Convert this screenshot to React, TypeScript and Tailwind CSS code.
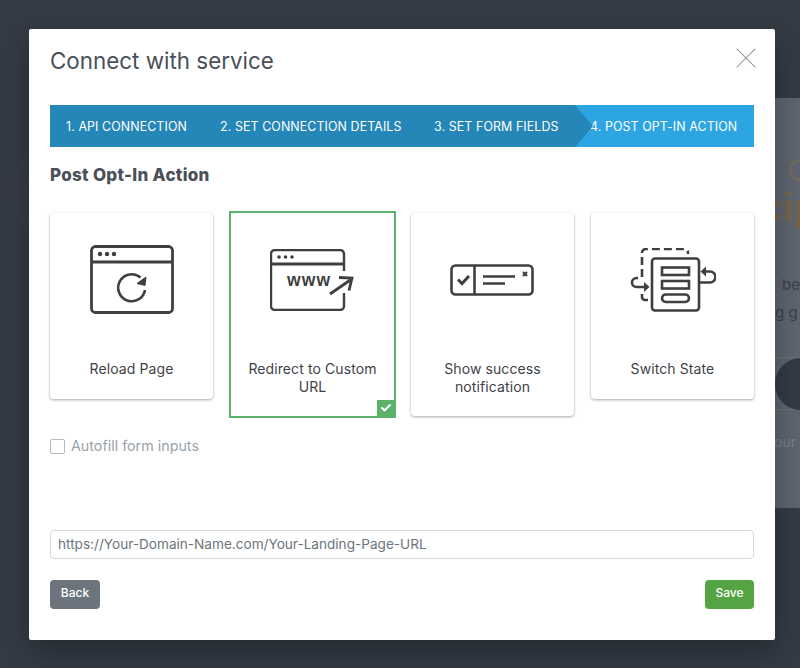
import React from 'react';
import { X, Check } from 'lucide-react';

const ReloadIcon = () => (
  <svg width="84" height="70" viewBox="0 0 84 70" fill="none" stroke="#3f3f3f" strokeWidth="2.8">
    <rect x="1.500" y="1.500" width="81" height="66" rx="4" />
    <path d="M1.500 17h81" />
    <circle cx="10" cy="9" r="2.200" fill="#3f3f3f" stroke="none" />
    <circle cx="17" cy="9" r="2.200" fill="#3f3f3f" stroke="none" />
    <circle cx="24" cy="9" r="2.200" fill="#3f3f3f" stroke="none" />
    <path d="M50.500 32.500A13.500 13.500 0 1 0 55 45" strokeWidth="2.600" />
    <path d="M47 38.500L56 32L55 40.500z" fill="#3f3f3f" stroke="#3f3f3f" strokeWidth="1" />
  </svg>
);

const RedirectIcon = () => (
  <svg width="86" height="62" viewBox="0 0 86 62" fill="none" stroke="#3f3f3f" strokeWidth="2.400">
    <path d="M74 22V5a4 4 0 0 0 -4 -4H5a4 4 0 0 0 -4 4v52a4 4 0 0 0 4 4h65a4 4 0 0 0 4 -4V44" />
    <path d="M1 15h73" strokeWidth="2.800" />
    <circle cx="9" cy="8" r="1.800" fill="#3f3f3f" stroke="none" />
    <circle cx="15.500" cy="8" r="1.800" fill="#3f3f3f" stroke="none" />
    <circle cx="22" cy="8" r="1.800" fill="#3f3f3f" stroke="none" />
    <text x="17" y="36.500" textLength="43" fontFamily="'Liberation Sans', sans-serif" fontSize="17.500" fontWeight="700" fill="#3f3f3f" stroke="none">www</text>
    <path d="M60 45l21-14.500M69 28.500l13 .5-3 12.500" strokeWidth="2.800" />
  </svg>
);

const NoticeIcon = () => (
  <svg className="ml-[-2px]" width="84" height="32" viewBox="0 0 84 32" fill="none" stroke="#3f3f3f" strokeWidth="2.600">
    <rect x="1.500" y="1.500" width="81" height="29" rx="4" />
    <path d="M24.500 1.500v29" />
    <path d="M8 15.500l4 4L19 12" strokeWidth="3" />
    <path d="M33 12.500h32M33 19.500h22" />
    <path d="M73 8l4 4M77 8l-4 4" strokeWidth="2.200" />
  </svg>
);

const SwitchIcon = () => (
  <svg width="86" height="64" viewBox="0 0 86 64" fill="none" stroke="#3f3f3f" strokeWidth="2.600">
    <path d="M12 29V5a4 4 0 0 1 4 -4h38a4 4 0 0 1 4 4v1" strokeDasharray="8 4" />
    <path d="M12 46v3a3 3 0 0 0 3 3h3" />
    <rect x="22" y="10.500" width="47" height="52" rx="3" />
    <rect x="32" y="19.500" width="27" height="7.500" />
    <rect x="32" y="33" width="27" height="7.500" />
    <rect x="32" y="46.500" width="27" height="7.500" rx="3.700" />
    <path d="M69 34.500h11a5.500 5.500 0 0 0 0 -11h-6" />
    <path d="M76 18.500l-5.500 5 5.500 5z" fill="#3f3f3f" stroke="none" />
    <path d="M8 30H6.500a4.500 4.500 0 0 0 0 9H15" />
    <path d="M14 34l5.500 5-5.500 5z" fill="#3f3f3f" stroke="none" />
  </svg>
);

const cards = [
  { label: 'Reload Page', icon: <ReloadIcon />, box: 'w-[163px] px-[14px] pb-[21px]' },
  { label: 'Redirect to Custom URL', icon: <RedirectIcon />, box: 'ml-[16px] w-[167px] px-[12px] pb-[20px] -mt-[2px]', selected: true },
  { label: 'Show success notification', icon: <NoticeIcon />, box: 'ml-[15px] w-[163px] px-[14px] pb-[20px]' },
  { label: 'Switch State', icon: <SwitchIcon />, box: 'ml-[17px] w-[163px] px-[14px] pb-[21px]' }
];

export default function App() {
  return (
    <div className="relative h-[668px] w-[800px] overflow-hidden bg-[#343b45] font-['Inter','Liberation_Sans',sans-serif]">
      {/* Page behind the overlay */}
      <svg className="absolute left-[10px] top-[148px]" width="20" height="92" viewBox="0 0 20 92" fill="none" stroke="#3a414b" strokeWidth="1.500">
        <path d="M20 8L2 26M20 13L1 32M20 18L1 37M20 23L1 42M20 28L1 47M20 33L2 51M20 38L3 55M20 43L4 59M20 48L5 63M20 53L7 66M20 58L8 70M20 63L10 73M20 68L12 76M20 73L14 79" />
      </svg>
      <div className="mt-[98px] ml-auto flex h-[410px] w-[25px] flex-col overflow-hidden bg-[#5e6570] whitespace-nowrap">
        <span className="mt-[54px] ml-[12px] text-[30px] leading-[36px] font-medium text-[#6f6a5e]">C</span>
        <span className="ml-[-14px] text-[38px] leading-[38px] font-bold text-[#75654a]">cip</span>
        <span className="mt-[45px] ml-[7px] text-[15px] leading-[28px] text-[#3a414c]">be</span>
        <span className="text-[15px] leading-[28px] text-[#3a414c]">g g</span>
        <div className="mt-[30px] h-[53px] border-y border-[#5d7a70]">
          <div className="h-[52px] w-[52px] rounded-full bg-[#343b45]" />
        </div>
        <span className="mt-[22px] ml-[-1px] text-[14px] leading-[20px] text-[#7a818b]">our</span>
      </div>

      {/* Modal */}
      <div className="absolute top-[29px] left-[29px] h-[611px] w-[746px] rounded-[2px] bg-white px-[21px] shadow-[0_12px_30px_rgba(0,0,0,0.3)]">
        <div className="flex h-[76px] items-start justify-between">
          <h1 className="pt-[16px] text-[22.400px] leading-[32px] text-[#4a5058]">Connect with service</h1>
          <X className="mt-[11px] mr-[-10px] h-9 w-9 text-[#8a8a8a]" strokeWidth={0.7} />
        </div>

        <div className="flex h-[42px] bg-[#2ca5e2] text-[12.400px] leading-[43px] tracking-[0.1px] whitespace-nowrap text-white">
          <div className="relative z-10 flex w-[543px] bg-[#2586b8] pl-[16px] [clip-path:polygon(0_0,525px_0,100%_50%,525px_100%,0_100%)]">
            <span className="w-[154px]">1. API CONNECTION</span>
            <span className="w-[214px]">2. SET CONNECTION DETAILS</span>
            <span>3. SET FORM FIELDS</span>
          </div>
          <span className="ml-[-3px]">4. POST OPT-IN ACTION</span>
        </div>

        <h2 className="mt-[18px] text-[17px] leading-[20px] font-extrabold tracking-[0.3px] text-[#4a5058]">Post Opt-In Action</h2>

        <div className="mt-[28px] flex items-start">
          {cards.map(card => (
            <div
              key={card.label}
              className={`relative bg-white text-center ${card.box} ${card.selected
                ? 'border-2 border-[#5cb26b]'
                : 'rounded-[4px] shadow-[0_1px_3px_rgba(0,0,0,0.35)]'}`}
            >
              <div className="flex h-[134px] items-center justify-center">{card.icon}</div>
              <p className="mt-[13px] text-[14px] leading-[18px] tracking-[0.1px] text-[#3f4349]">{card.label}</p>
              {card.selected && (
                <span className="absolute right-0 bottom-0 flex h-[16px] w-[17px] items-center justify-center bg-[#5cb26b]">
                  <Check className="h-[12px] w-[12px] text-white" strokeWidth={4} />
                </span>
              )}
            </div>
          ))}
        </div>

        <label className="mt-[19px] flex items-center gap-[6px] text-[14.300px] leading-[18px] text-[#9aa3ab]">
          <span className="h-[15px] w-[15px] rounded-[2px] border border-[#b5bbc1] bg-white" />
          Autofill form inputs
        </label>

        <input
          readOnly
          value="https://Your-Domain-Name.com/Your-Landing-Page-URL"
          className="mt-[75px] h-[29px] w-full rounded-[4px] border border-[#d5d8db] px-[7px] pb-[1px] text-[13.600px] text-[#6c757d] outline-none"
        />

        <div className="mt-[21px] flex justify-between">
          <button className="h-[29px] w-[50px] rounded-[4px] bg-[#6c757d] pb-[3px] text-[12px] font-medium text-white">Back</button>
          <button className="h-[29px] w-[49px] rounded-[4px] bg-[#54a444] pb-[3px] text-[12px] font-medium text-white">Save</button>
        </div>
      </div>
    </div>
  );
}
